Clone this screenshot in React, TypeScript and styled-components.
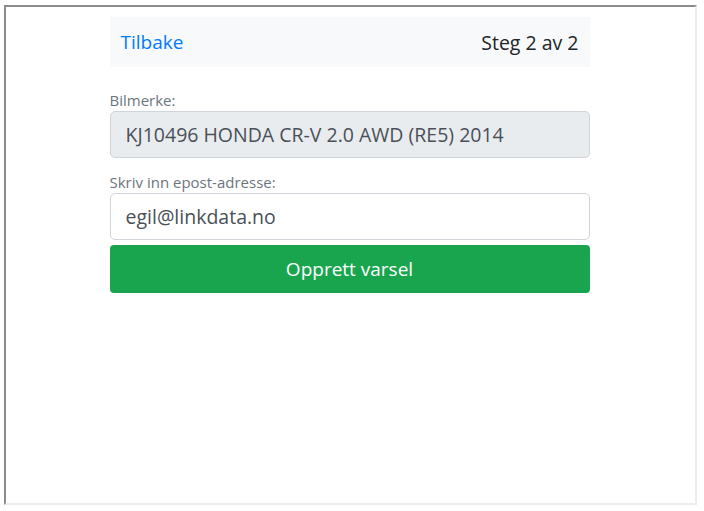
import React from "react";
import styled, { createGlobalStyle } from "styled-components";

const GlobalStyle = createGlobalStyle`
  html, body {
    margin: 0;
    padding: 0;
    background: #ffffff;
  }
  body {
    font-family: "Open Sans", "Noto Sans", sans-serif;
    color: #212529;
  }
`;

const Frame = styled.div`
  margin: 5px 7px 0 4px;
  height: 500px;
  box-sizing: border-box;
  border-style: solid;
  border-width: 2px;
  border-color: #8c8c8c #ececec #ececec #8c8c8c;
  padding: 10px 2px 0 0;
`;

const Container = styled.div`
  width: 480px;
  margin: 0 auto;
`;

const Header = styled.div`
  height: 50px;
  background: #f8f9fa;
  display: flex;
  align-items: center;
  justify-content: space-between;
  padding: 0 11px;
  font-size: 19px;
  margin-bottom: 22px;
`;

const BackLink = styled.a`
  color: #007bff;
  text-decoration: none;
  cursor: pointer;
`;

const Step = styled.span`
  color: #212529;
  font-size: 19.5px;
`;

const Label = styled.label<{ $first?: boolean }>`
  display: block;
  font-size: 15px;
  line-height: 22px;
  color: #6c757d;
  margin-top: ${(p) => (p.$first ? "0" : "13px")};
`;

const Field = styled.input`
  display: block;
  width: 100%;
  height: 47px;
  box-sizing: border-box;
  padding: 0 15px;
  font-family: inherit;
  font-size: 19.5px;
  color: #495057;
  background: ${(p) => (p.readOnly ? "#e9ecef" : "#ffffff")};
  border: 1px solid #ced4da;
  border-radius: 5px;
  outline: none;
`;

const SubmitButton = styled.button`
  display: block;
  width: 100%;
  height: 48px;
  margin-top: 5px;
  border: none;
  border-radius: 4px;
  background: #18a54e;
  color: #ffffff;
  font-family: inherit;
  font-size: 19px;
  cursor: pointer;
`;

export default function App() {
  return (
    <>
      <GlobalStyle />
      <Frame>
        <Container>
          <Header>
            <BackLink>Tilbake</BackLink>
            <Step>Steg 2 av 2</Step>
          </Header>
          <Label $first>Bilmerke:</Label>
          <Field readOnly value="KJ10496 HONDA CR-V 2.0 AWD (RE5) 2014" />
          <Label>Skriv inn epost-adresse:</Label>
          <Field defaultValue="egil@linkdata.no" />
          <SubmitButton>Opprett varsel</SubmitButton>
        </Container>
      </Frame>
    </>
  );
}
